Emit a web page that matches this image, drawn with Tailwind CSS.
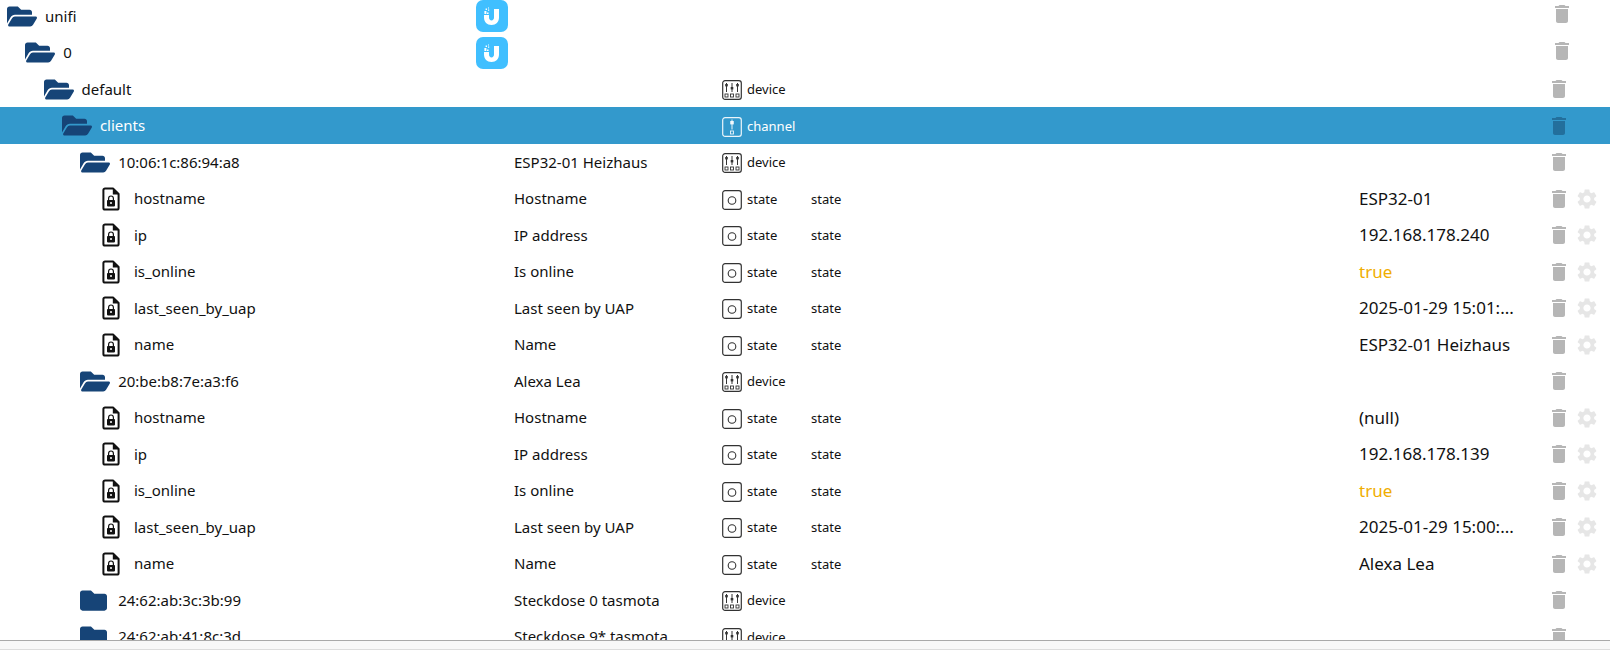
<!DOCTYPE html>
<html lang="en">
<head>
    <meta charset="UTF-8">
    <title>Objects</title>
    <script src="https://cdn.jsdelivr.net/npm/@tailwindcss/browser@4"></script>
</head>
<body class="bg-white overflow-hidden h-[650px] font-['Noto_Sans','Open_Sans',sans-serif] text-[#111]">
    <svg class="hidden">
        <symbol id="open" viewBox="0 0 576 512"><path fill="currentColor" d="M572.694 292.093L500.27 416.248A63.997 63.997 0 0 1 444.989 448H45.025c-18.523 0-30.064-20.093-20.731-36.093l72.424-124.155A64 64 0 0 1 152 256h399.964c18.523 0 30.064 20.093 20.73 36.093zM152 224h328v-48c0-26.51-21.49-48-48-48H272l-64-64H48C21.49 64 0 85.49 0 112v278.046l69.077-118.418C86.214 242.25 117.989 224 152 224z"/></symbol>
        <symbol id="closed" viewBox="0 0 512 512"><path fill="currentColor" d="M464 128H272l-64-64H48C21.49 64 0 85.49 0 112v288c0 26.51 21.49 48 48 48h416c26.51 0 48-21.49 48-48V176c0-26.51-21.49-48-48-48z"/></symbol>
        <symbol id="trash" viewBox="0 0 24 24"><path fill="currentColor" d="M6 19c0 1.1.9 2 2 2h8c1.1 0 2-.9 2-2V7H6v12zM19 4h-3.5l-1-1h-5l-1 1H5v2h14V4z"/></symbol>
        <symbol id="gear" viewBox="0 0 24 24"><path fill="currentColor" d="M19.14 12.94c.04-.3.06-.61.06-.94 0-.32-.02-.64-.07-.94l2.03-1.58c.18-.14.23-.41.12-.61l-1.92-3.32c-.12-.22-.37-.29-.59-.22l-2.39.96c-.5-.38-1.03-.7-1.62-.94l-.36-2.54c-.04-.24-.24-.41-.48-.41h-3.84c-.24 0-.43.17-.47.41l-.36 2.54c-.59.24-1.13.57-1.62.94l-2.39-.96c-.22-.08-.47 0-.59.22L2.74 8.87c-.12.21-.08.47.12.61l2.03 1.58c-.05.3-.09.63-.09.94s.02.64.07.94l-2.03 1.58c-.18.14-.23.41-.12.61l1.92 3.32c.12.22.37.29.59.22l2.39-.96c.5.38 1.03.7 1.62.94l.36 2.54c.05.24.24.41.48.41h3.84c.24 0 .44-.17.47-.41l.36-2.54c.59-.24 1.13-.56 1.62-.94l2.39.96c.22.08.47 0 .59-.22l1.92-3.32c.12-.22.07-.47-.12-.61l-2.01-1.58zM12 15.6c-1.98 0-3.6-1.62-3.6-3.6s1.62-3.6 3.6-3.6 3.6 1.62 3.6 3.6-1.62 3.6-3.6 3.6z"/></symbol>
        <symbol id="file" viewBox="0 0 18 24">
            <path fill="none" stroke="currentColor" stroke-width="2" stroke-linejoin="round" d="M3 1.4h8l5.6 5.6v14a1.6 1.6 0 0 1-1.6 1.6H3a1.6 1.6 0 0 1-1.6-1.6V3A1.6 1.6 0 0 1 3 1.4z"/>
            <path fill="currentColor" d="M10.8 1.6v5.8h5.6z"/>
            <rect x="5" y="13" width="8" height="6.4" rx=".8" fill="currentColor"/>
            <path fill="none" stroke="currentColor" stroke-width="1.2" d="M6.6 13v-1.6a2.4 2.4 0 0 1 4.8 0V13"/>
            <circle cx="9" cy="16" r="1" fill="#fff"/>
        </symbol>
        <symbol id="device" viewBox="0 0 20 20" fill="none" stroke="currentColor">
            <rect x=".7" y=".7" width="18.6" height="18.6" rx="2.4" stroke-width="1.2"/>
            <path stroke-width="1" d="M4.5 3v9M10 3v9M15.5 3v9"/>
            <rect x="3.2" y="4" width="2.6" height="2.4" fill="currentColor" stroke="none"/>
            <rect x="8.7" y="7" width="2.6" height="2.4" fill="currentColor" stroke="none"/>
            <rect x="14.2" y="4" width="2.6" height="2.4" fill="currentColor" stroke="none"/>
            <rect x="3" y="14" width="3" height="3" stroke-width=".9"/>
            <rect x="8.5" y="14" width="3" height="3" stroke-width=".9"/>
            <rect x="14" y="14" width="3" height="3" stroke-width=".9"/>
        </symbol>
        <symbol id="channel" viewBox="0 0 20 20" fill="none" stroke="currentColor">
            <rect x=".7" y=".7" width="18.6" height="18.6" rx="2.4" stroke-width="1.2"/>
            <path stroke-width="1" d="M10 2.5v10"/>
            <rect x="8.2" y="4" width="3.6" height="3.4" fill="currentColor" stroke="none"/>
            <rect x="8.5" y="14" width="3" height="3" stroke-width=".9"/>
        </symbol>
        <symbol id="state" viewBox="0 0 20 20" fill="none" stroke="currentColor">
            <rect x=".7" y=".7" width="18.6" height="18.6" rx="2.4" stroke-width="1.2"/>
            <circle cx="10" cy="10.5" r="3.8" stroke-width="1.1"/>
        </symbol>
        <symbol id="unifi" viewBox="0 0 32 32">
            <rect width="32" height="32" rx="7" fill="#40bfff"/>
            <path fill="#fff" d="M18 9h5v8.5c0 4.5-3 7.5-7.5 7.5S8 22 8 17.5V15h5v2.5c0 1.8 1 2.9 2.5 2.9s2.5-1.1 2.5-2.9z"/>
            <path fill="#fff" d="M8.4 11h2v3h-2zM11 12.4h1.6V14H11zM9.6 8.4h1.4v1.6H9.6zM12 9.6h1.2v1.2H12zM12 7.4h1v1h-1z"/>
        </symbol>
    </svg>

    <div id="rows" class="-mt-[2.25px]"></div>

    <div class="fixed left-0 right-0 top-[640px] h-[10px] bg-[#f7f7f7] border-t border-t-[#a8a8a8] border-b border-b-[#dcdcdc]"></div>

    <script>
        const client = (mac, title, host, ip, seen, name) => [
            { d: 4, k: 'open', n: mac, t: title, ty: 'device' },
            { d: 5, k: 'file', n: 'hostname', t: 'Hostname', ty: 'state', v: host },
            { d: 5, k: 'file', n: 'ip', t: 'IP address', ty: 'state', v: ip },
            { d: 5, k: 'file', n: 'is_online', t: 'Is online', ty: 'state', v: 'true', on: true },
            { d: 5, k: 'file', n: 'last_seen_by_uap', t: 'Last seen by UAP', ty: 'state', v: seen },
            { d: 5, k: 'file', n: 'name', t: 'Name', ty: 'state', v: name },
        ];

        const data = [
            { d: 0, k: 'open', n: 'unifi', logo: true },
            { d: 1, k: 'open', n: '0', logo: true },
            { d: 2, k: 'open', n: 'default', ty: 'device' },
            { d: 3, k: 'open', n: 'clients', ty: 'channel', sel: true },
            ...client('10:06:1c:86:94:a8', 'ESP32-01 Heizhaus', 'ESP32-01', '192.168.178.240', '2025-01-29 15:01:...', 'ESP32-01 Heizhaus'),
            ...client('20:be:b8:7e:a3:f6', 'Alexa Lea', '(null)', '192.168.178.139', '2025-01-29 15:00:...', 'Alexa Lea'),
            { d: 4, k: 'closed', n: '24:62:ab:3c:3b:99', t: 'Steckdose 0 tasmota', ty: 'device' },
            { d: 4, k: 'closed', n: '24:62:ab:41:8c:3d', t: 'Steckdose 9* tasmota', ty: 'device' },
        ];

        const use = (id, cls) => `<svg class="${cls}"><use href="#${id}"/></svg>`;

        function nameIcon(r) {
            if (r.k === 'file') return use('file', 'w-[18px] h-[24px] ml-[102px] mr-[14px] shrink-0 text-[#111]');
            const left = 7 + r.d * 18.3;
            if (r.k === 'closed') return `<span class="shrink-0 w-[38px]" style="margin-left:${left}px">${use('closed', 'w-[27px] h-[27px] text-[#164477]')}</span>`;
            return `<span class="shrink-0 w-[38px] flex" style="margin-left:${left}px">${use('open', 'w-[30px] h-[27px] text-[#164477]')}</span>`;
        }

        document.getElementById('rows').innerHTML = data.map(r => `
            <div class="flex items-center h-[36.5px] ${r.sel ? 'bg-[#3399cc] text-white' : ''}">
                <div class="w-[476px] shrink-0 flex items-center text-[15px]">${nameIcon(r)}<span>${r.n}</span></div>
                <div class="w-[38px] shrink-0 flex items-center">${r.logo ? use('unifi', 'w-[32px] h-[32px]') : ''}</div>
                <div class="w-[208px] shrink-0 text-[15px] truncate">${r.t || ''}</div>
                <div class="w-[89px] shrink-0 flex items-center text-[13px]">${r.ty ? use(r.ty, `w-[20px] h-[20px] mr-[5px] translate-y-[1px] ${r.sel ? 'text-white/90' : 'text-[#333]'}`) + `<span class="translate-y-[1px]">${r.ty}</span>` : ''}</div>
                <div class="w-[548px] shrink-0 text-[13px] translate-y-[1px]">${r.ty === 'state' ? 'state' : ''}</div>
                <div class="w-[162px] shrink-0 text-[17px] whitespace-nowrap ${r.on ? 'text-[#f0ad00]' : ''}">${r.v || ''}</div>
                <div class="ml-[26px] flex items-center ${r.logo ? 'pl-[3px] -translate-y-[2px]' : ''}">
                    ${use('trash', `w-[24px] h-[24px] shrink-0 ${r.sel ? 'text-[#236f9c]' : 'text-[#b6b6b6]'}`)}
                    ${r.v ? use('gear', 'w-[24px] h-[24px] ml-[4px] shrink-0 text-[#e6e6e6]') : ''}
                </div>
            </div>`).join('');
    </script>
</body>
</html>
